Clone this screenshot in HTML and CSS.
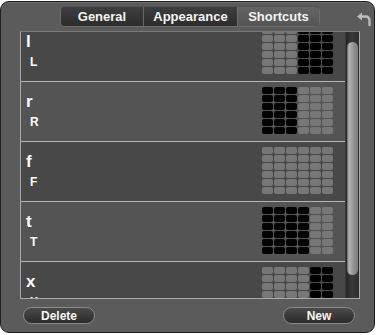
FILE: index.html
```html
<!DOCTYPE html>
<html>
<head>
<meta charset="utf-8">
<link rel="stylesheet" href="styles.css">
</head>
<body>
<div class="window">
  <div class="header">
    <div class="tabs">
      <div class="tab t-general">General</div>
      <div class="tab t-appearance">Appearance</div>
      <div class="tab t-shortcuts selected">Shortcuts</div>
    </div>
    <svg class="undo" width="16" height="16" viewBox="0 0 16 16">
      <path d="M1 5.5 L6 1.5 L6 9.5 Z" fill="#bdbdbd"/>
      <path d="M5 5.5 H9.5 Q13.5 5.5 13.5 9.5 V14" fill="none" stroke="#bdbdbd" stroke-width="2.4" stroke-linecap="round"/>
    </svg>
  </div>
  <div class="list">
    <div class="rows">
      <div class="rows-inner">
        <div class="row odd">
          <div class="letters"><div class="big">l</div><div class="small">L</div></div>
          <div class="grid g-l"></div>
        </div>
        <div class="row even">
          <div class="letters"><div class="big">r</div><div class="small">R</div></div>
          <div class="grid g-r"></div>
        </div>
        <div class="row odd">
          <div class="letters"><div class="big">f</div><div class="small">F</div></div>
          <div class="grid g-f"></div>
        </div>
        <div class="row even">
          <div class="letters"><div class="big">t</div><div class="small">T</div></div>
          <div class="grid g-t"></div>
        </div>
        <div class="row odd">
          <div class="letters"><div class="big">x</div><div class="small">X</div></div>
          <div class="grid g-x"></div>
        </div>
      </div>
    </div>
    <div class="scroll"><div class="thumb"></div></div>
  </div>
  <div class="footer">
    <div class="btn btn-delete">Delete</div>
    <div class="btn btn-new">New</div>
  </div>
</div>
<script>
  var patterns = {l:[0,0,0,1,1,1], r:[1,1,1,0,0,0], f:[0,0,0,0,0,0], t:[1,1,1,1,0,0], x:[0,0,0,0,1,1]};
  Object.keys(patterns).forEach(function(k){
    var g = document.querySelector('.g-' + k);
    for (var r = 0; r < 6; r++) {
      for (var c = 0; c < 6; c++) {
        var d = document.createElement('div');
        d.className = 'cell' + (patterns[k][c] ? ' on' : '');
        g.appendChild(d);
      }
    }
  });
</script>
</body>
</html>
```

FILE: styles.css
```css
html, body {
  margin: 0;
  padding: 0;
  background: #ffffff;
}

.window {
  box-sizing: border-box;
  width: 375px;
  height: 332px;
  margin-top: 1px;
  border: 1px solid #1e1e1e;
  border-radius: 9px;
  background: #5b5b5b;
  box-shadow: inset 0 1px 0 #6c6c6c;
  padding: 0 14px 0 19px;
  display: flex;
  flex-direction: column;
  font-family: "Liberation Sans", Arial, sans-serif;
  color: #fff;
}

.header {
  display: flex;
  align-items: flex-start;
  justify-content: space-between;
  padding: 4px 0 0 40px;
  height: 29px;
  box-sizing: border-box;
  flex-shrink: 0;
}

.tabs {
  display: flex;
  height: 21px;
  box-sizing: border-box;
  border: 1px solid #6d6d6d;
  border-top-color: #555;
  border-radius: 5px;
  overflow: hidden;
  background: #2f2f2f;
}

.tab {
  box-sizing: border-box;
  height: 100%;
  display: flex;
  align-items: center;
  justify-content: center;
  font-size: 13px;
  font-weight: bold;
  color: #f4f4f4;
  background: linear-gradient(#3e3e3e, #2c2c2c);
}

.t-general { width: 83px; border-right: 1px solid #666; }
.t-appearance { width: 94px; border-right: 1px solid #707070; }
.t-shortcuts { width: 81px; }

.tab.selected {
  background: linear-gradient(#646464, #555555);
}

.undo {
  margin-top: 5px;
  margin-right: -12px;
}

.list {
  box-sizing: border-box;
  height: 268px;
  flex-shrink: 0;
  border: 1px solid #a9a9a9;
  border-top-color: #7a7a7a;
  display: flex;
  background: #484848;
}

.rows {
  flex: 1;
  overflow: hidden;
}

.rows-inner {
  margin-top: -10px;
}

.row {
  box-sizing: border-box;
  height: 60px;
  border-bottom: 1px solid #b4b4b4;
  display: flex;
  justify-content: space-between;
  align-items: flex-start;
  padding: 5px 12px 0 5px;
}

.row.odd { background: #484848; }
.row.even { background: #545454; }

.letters {
  margin-top: 5px;
  font-weight: bold;
}

.big {
  font-size: 17px;
  line-height: 20px;
}

.small {
  font-size: 12px;
  line-height: 20px;
  margin-left: 4px;
}

.grid {
  display: grid;
  grid-template-columns: repeat(6, 11px);
  grid-template-rows: repeat(6, 7px);
  gap: 1px;
}

.cell {
  background: #777777;
  border-radius: 2px;
}

.cell.on {
  background: #030303;
}

.scroll {
  width: 14px;
  box-sizing: border-box;
  padding: 10px 1px 23px 1px;
  background: linear-gradient(to right, #262626, #3a3a3a 50%, #2e2e2e);
  display: flex;
  border-left: 1px solid #3a3a3a;
}

.thumb {
  flex: 1;
  border-radius: 6px;
  background: linear-gradient(to right, #6a6a6a, #b4b4b4 20%, #959595 55%, #7b7b7b);
}

.footer {
  display: flex;
  justify-content: space-between;
  margin-top: 8px;
  padding: 0 5px 0 3px;
}

.btn {
  box-sizing: border-box;
  width: 72px;
  height: 17px;
  border: 1px solid #8c8c8c;
  border-radius: 9px;
  background: linear-gradient(#4a4a4a, #2b2b2b);
  display: flex;
  align-items: center;
  justify-content: center;
  font-size: 12px;
  font-weight: bold;
  color: #f6f6f6;
}
```
